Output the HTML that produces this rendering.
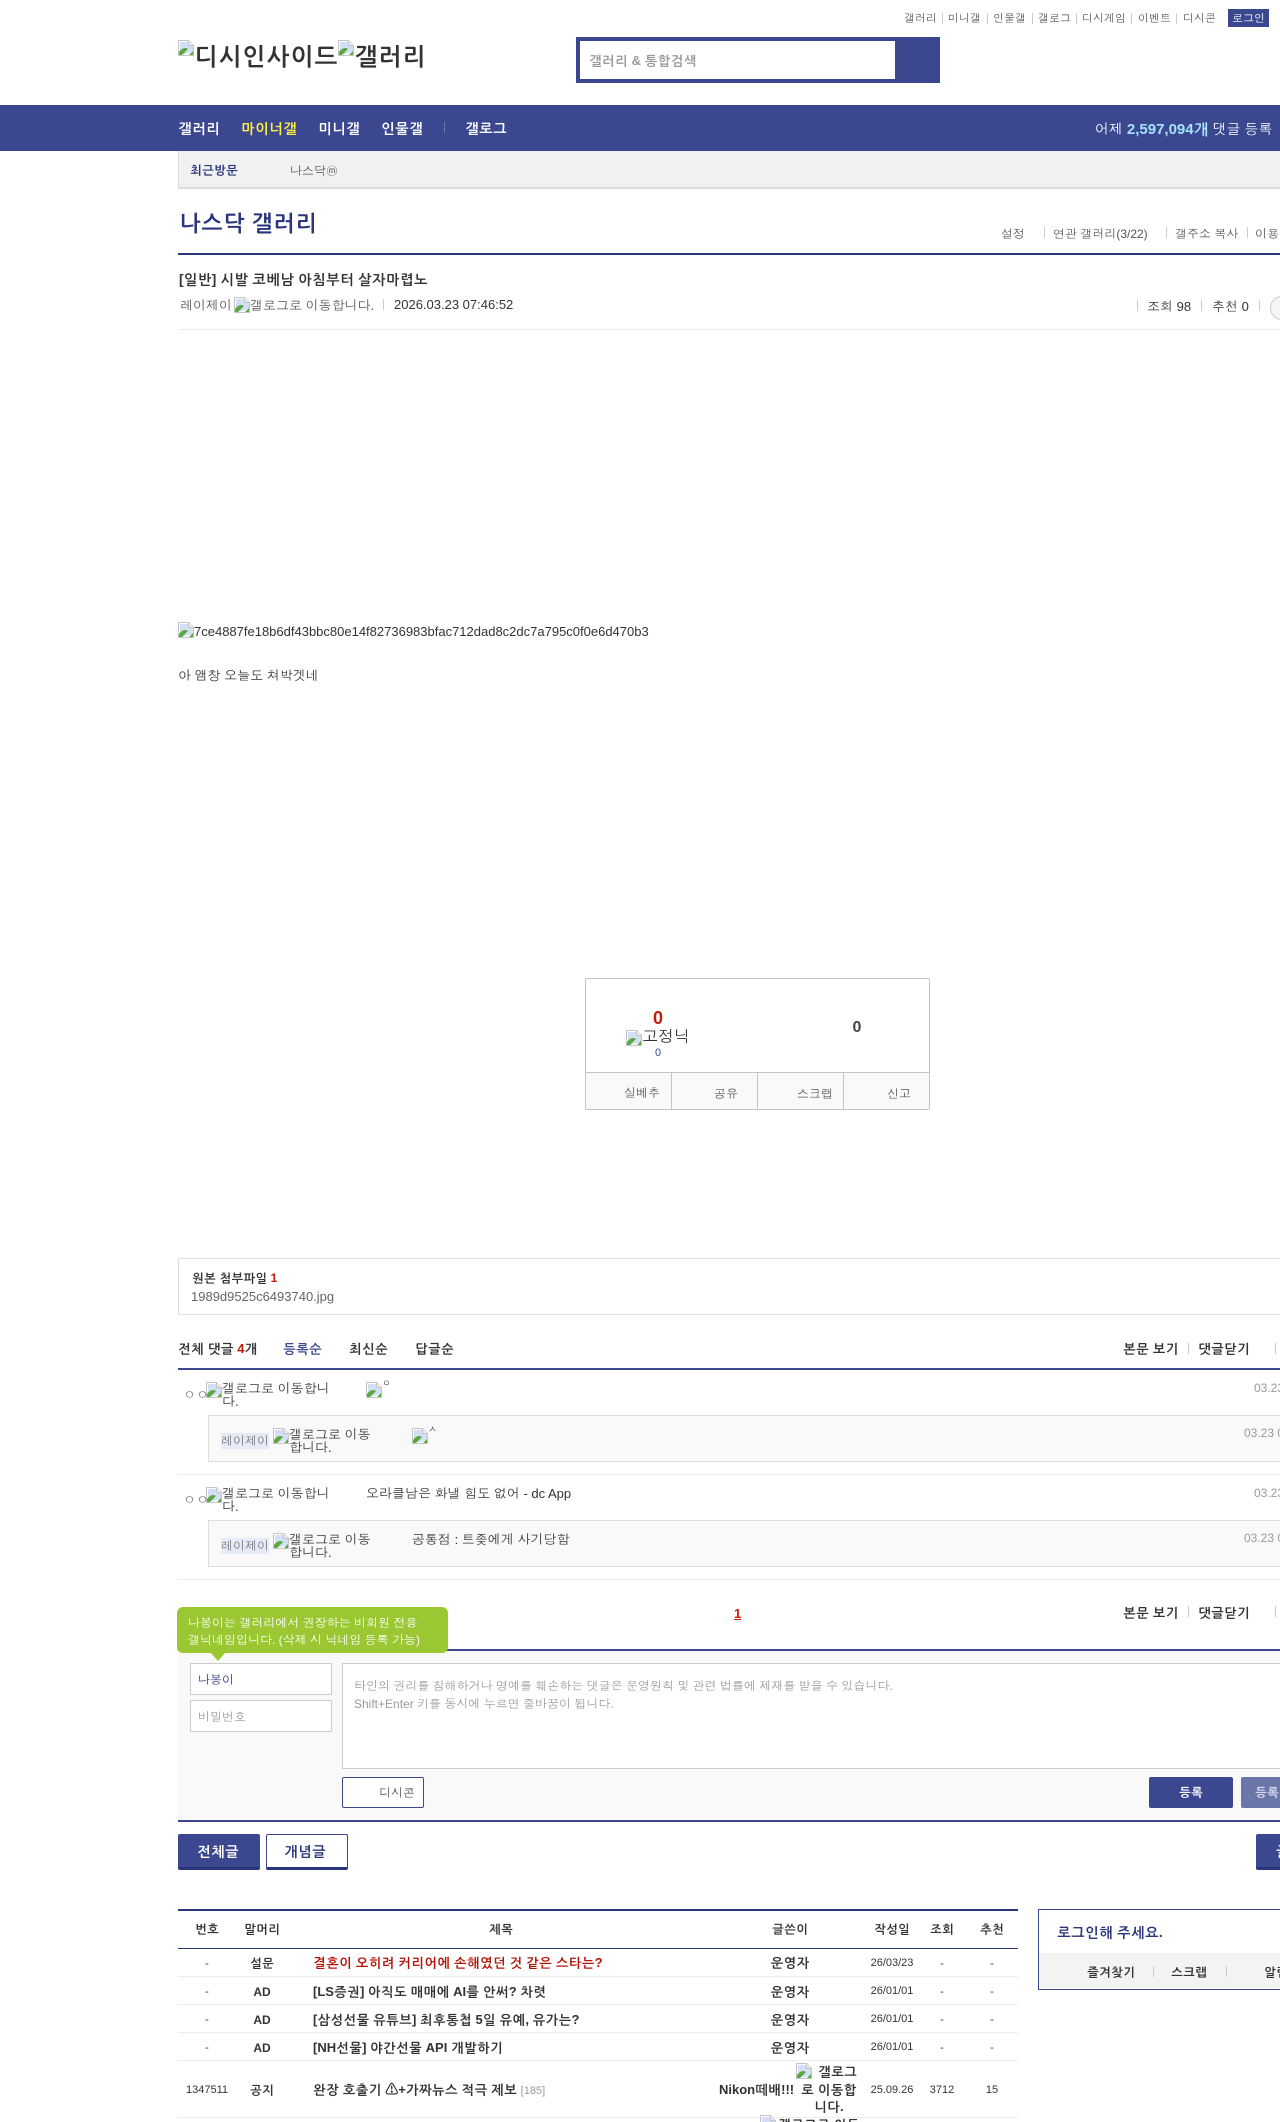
<!DOCTYPE html>
<html><head><meta charset="utf-8"><title>나스닥 갤러리</title>
<style>
html,body{margin:0;padding:0;width:1280px;height:2122px;overflow:hidden;background:#fff}
body{position:relative;font-family:"Liberation Sans",Dotum,Gulim,"Noto Sans CJK KR",sans-serif;font-size:12px;color:#333}
.t{position:absolute;white-space:nowrap;line-height:16px;margin-top:1px}
.b,b{font-weight:bold;font-family:"Liberation Sans",NanumGothicCoding,Gulim,"Noto Sans CJK KR",sans-serif}
.r{position:absolute}
.c{transform:translateX(-50%)}
.i{position:absolute;width:16px;height:16px}
.s{position:absolute;width:1px;height:11px;background:#ccc}
</style></head><body>
<svg width="0" height="0" style="position:absolute"><symbol id="bk" viewBox="0 0 16 16"><path d="M.5 15.500V.5h10l5 5v10z" fill="#fff" stroke="#c4c4c4"/><path d="M2 2h8v4h5v6L8 14H2z" fill="#d3dff6"/><path d="M1 15v-3c3-4 6-5 9-3L4 15zM11 15l4-4v4z" fill="#5aa83f"/><path d="M10.500.5v5h5" fill="#eee" stroke="#c4c4c4"/></symbol></svg>

<span class="t" style="left:904px;top:10px;font-size:11px;color:#555">갤러리</span><i class="s" style="left:942px;top:13px"></i>
<span class="t" style="left:948px;top:10px;font-size:11px;color:#555">미니갤</span><i class="s" style="left:987px;top:13px"></i>
<span class="t" style="left:993px;top:10px;font-size:11px;color:#555">인물갤</span><i class="s" style="left:1032px;top:13px"></i>
<span class="t" style="left:1038px;top:10px;font-size:11px;color:#555">갤로그</span><i class="s" style="left:1076px;top:13px"></i>
<span class="t" style="left:1082px;top:10px;font-size:11px;color:#555">디시게임</span><i class="s" style="left:1131px;top:13px"></i>
<span class="t" style="left:1138px;top:10px;font-size:11px;color:#555">이벤트</span><i class="s" style="left:1176px;top:13px"></i>
<span class="t" style="left:1183px;top:10px;font-size:11px;color:#555">디시콘</span>
<div class="r" style="left:1228px;top:9px;width:41px;height:18px;background:#3b4890"></div>
<span class="t" style="left:1232px;top:10px;font-size:11px;color:#fff">로그인</span>

<svg class="i" style="left:178px;top:40px"><use href="#bk"/></svg>
<span class="t b" style="left:194px;top:44px;font-size:24px;line-height:24px;color:#333">디시인사이드</span>
<svg class="i" style="left:338px;top:40px"><use href="#bk"/></svg>
<span class="t b" style="left:354px;top:44px;font-size:24px;line-height:24px;color:#333">갤러리</span>

<div class="r" style="left:576px;top:37px;width:364px;height:46px;background:#3b4890"></div>
<div class="r" style="left:580px;top:41px;width:315px;height:38px;background:#fff"></div>
<span class="t b" style="left:589px;top:52px;font-size:13px;color:#999">갤러리 &amp; 통합검색</span>

<div class="r" style="left:0;top:105px;width:1280px;height:46px;background:#3b4890"></div>
<span class="t b" style="left:178px;top:119px;font-size:14px;color:#fff">갤러리</span>
<span class="t b" style="left:241px;top:119px;font-size:14px;color:#ffed44">마이너갤</span>
<span class="t b" style="left:318px;top:119px;font-size:14px;color:#fff">미니갤</span>
<span class="t b" style="left:381px;top:119px;font-size:14px;color:#fff">인물갤</span>
<i class="s" style="left:444px;top:122px;background:#6a76b0"></i>
<span class="t b" style="left:465px;top:119px;font-size:14px;color:#fff">갤로그</span>
<span class="t" style="left:1095px;top:120px;font-size:14px;color:#fff">어제 <b style="color:#a3e3ff;font-size:15px">2,597,094개</b> 댓글 등록</span>

<div class="r" style="left:178px;top:151px;width:1102px;height:36px;background:#f1f1f1;border-left:1px solid #ddd;border-bottom:2px solid #ddd"></div>
<span class="t b" style="left:190px;top:161px;color:#29367c">최근방문</span>
<span class="t" style="left:290px;top:162px;color:#555">나스닥ⓜ</span>

<span class="t b" style="left:179px;top:210px;font-size:22px;line-height:24px;color:#29367c">나스닥 갤러리</span>
<span class="t" style="left:1001px;top:225px;color:#555">설정</span><i class="s" style="left:1044px;top:227px"></i>
<span class="t" style="left:1053px;top:225px;color:#555">연관 갤러리(3/22)</span><i class="s" style="left:1166px;top:227px"></i>
<span class="t" style="left:1175px;top:225px;color:#555">갤주소 복사</span><i class="s" style="left:1247px;top:227px"></i>
<span class="t" style="left:1255px;top:225px;color:#555">이용안내</span>
<div class="r" style="left:178px;top:253px;width:1102px;height:2px;background:#29367c"></div>

<span class="t b" style="left:179px;top:270px;font-size:14px;color:#333">[일반] 시발 코베남 아침부터 살자마렵노</span>
<span class="t" style="left:180px;top:297px;font-size:13px;color:#555">레이제이</span>
<svg class="i" style="left:234px;top:297px"><use href="#bk"/></svg>
<span class="t" style="left:250px;top:297px;font-size:13px;color:#555">갤로그로 이동합니다.</span>
<i class="s" style="left:383px;top:299px"></i>
<span class="t" style="left:394px;top:296px;font-size:13px;color:#333">2026.03.23 07:46:52</span>
<i class="s" style="left:1137px;top:300px"></i>
<span class="t" style="left:1147px;top:298px;font-size:13px;color:#333">조회 98</span>
<i class="s" style="left:1201px;top:300px"></i>
<span class="t" style="left:1212px;top:298px;font-size:13px;color:#333">추천 0</span>
<i class="s" style="left:1259px;top:300px"></i>
<div class="r" style="left:1270px;top:296px;width:30px;height:22px;border:1px solid #ccc;border-radius:12px;background:#f5f5f5"></div>
<div class="r" style="left:178px;top:329px;width:1102px;height:1px;background:#eee"></div>

<svg class="i" style="left:178px;top:622px"><use href="#bk"/></svg>
<span class="t" style="left:194px;top:623px;font-size:13px;color:#333">7ce4887fe18b6df43bbc80e14f82736983bfac712dad8c2dc7a795c0f0e6d470b3</span>
<span class="t" style="left:178px;top:667px;font-size:13px;color:#333">아 앰창 오늘도 쳐박겟네</span>

<div class="r" style="left:585px;top:978px;width:343px;height:130px;border:1px solid #c4c4c4;border-radius:2px;background:#fff"></div>
<div class="r" style="left:586px;top:1072px;width:343px;height:36px;background:#f9f9f9;border-top:1px solid #c4c4c4"></div>
<i class="r" style="left:671px;top:1072px;width:1px;height:37px;background:#c4c4c4"></i>
<i class="r" style="left:757px;top:1072px;width:1px;height:37px;background:#c4c4c4"></i>
<i class="r" style="left:843px;top:1072px;width:1px;height:37px;background:#c4c4c4"></i>
<span class="t b c" style="left:658px;top:1009px;font-size:18px;color:#c21b0c">0</span>
<svg class="i" style="left:626px;top:1030px"><use href="#bk"/></svg>
<span class="t" style="left:642px;top:1029px;font-size:16px;color:#333">고정닉</span>
<span class="t c" style="left:658px;top:1044px;font-size:11px;color:#3b4890">0</span>
<span class="t b c" style="left:857px;top:1019px;font-size:16px;color:#444">0</span>
<span class="t" style="left:624px;top:1084px;color:#555">실베추</span>
<span class="t" style="left:714px;top:1085px;color:#555">공유</span>
<span class="t" style="left:797px;top:1085px;color:#555">스크랩</span>
<span class="t" style="left:887px;top:1085px;color:#555">신고</span>

<div class="r" style="left:178px;top:1258px;width:1102px;height:55px;border:1px solid #ddd;border-right:0"></div>
<span class="t b" style="left:192px;top:1269px;color:#333">원본 첨부파일 <span style="color:#c21b0c">1</span></span>
<span class="t" style="left:191px;top:1288px;font-size:13px;color:#666">1989d9525c6493740.jpg</span>

<span class="t b" style="left:178px;top:1340px;font-size:13px;color:#333">전체 댓글 <span style="color:#c21b0c">4</span>개</span>
<span class="t b" style="left:283px;top:1340px;font-size:13px;color:#3b4890">등록순</span>
<span class="t b" style="left:349px;top:1340px;font-size:13px;color:#333">최신순</span>
<span class="t b" style="left:415px;top:1340px;font-size:13px;color:#333">답글순</span>
<span class="t b" style="left:1123px;top:1340px;font-size:13px;color:#333">본문 보기</span><i class="s" style="left:1188px;top:1343px"></i>
<span class="t b" style="left:1198px;top:1340px;font-size:13px;color:#333">댓글닫기</span><i class="s" style="left:1275px;top:1343px"></i>
<div class="r" style="left:178px;top:1368px;width:1102px;height:2px;background:#3b4890"></div>

<span class="t" style="left:183px;top:1386px;font-size:13px;color:#777">ㅇㅇ</span>
<svg class="i" style="left:206px;top:1382px"><use href="#bk"/></svg>
<span class="t" style="left:222px;top:1381px;font-size:13px;line-height:13px;color:#333;white-space:normal;width:112px">갤로그로 이동합니다.</span>
<svg class="i" style="left:366px;top:1382px"><use href="#bk"/></svg>
<span class="t" style="left:382px;top:1376px;font-size:9px;line-height:12px;color:#333">ㅇ</span>
<span class="t" style="left:1254px;top:1379px;color:#999">03.23 07:51:13</span>
<div class="r" style="left:208px;top:1415px;width:1072px;height:45px;background:#f9f9f9;border:1px solid #ddd;border-right:0"></div>
<span class="t" style="left:221px;top:1432px;color:#777;background:#e6eaf9">레이제이</span>
<svg class="i" style="left:273px;top:1428px"><use href="#bk"/></svg>
<span class="t" style="left:289px;top:1427px;font-size:13px;line-height:13px;color:#333;white-space:normal;width:86px">갤로그로 이동합니다.</span>
<svg class="i" style="left:412px;top:1428px"><use href="#bk"/></svg>
<span class="t" style="left:428px;top:1422px;font-size:9px;line-height:12px;color:#333">ㅅ</span>
<span class="t" style="left:1244px;top:1424px;color:#999">03.23 08:10:02</span>
<div class="r" style="left:178px;top:1474px;width:1102px;height:1px;background:#eee"></div>

<span class="t" style="left:183px;top:1491px;font-size:13px;color:#777">ㅇㅇ</span>
<svg class="i" style="left:206px;top:1487px"><use href="#bk"/></svg>
<span class="t" style="left:222px;top:1486px;font-size:13px;line-height:13px;color:#333;white-space:normal;width:112px">갤로그로 이동합니다.</span>
<span class="t" style="left:366px;top:1485px;font-size:13px;color:#333">오라클남은 화낼 힘도 없어 - dc App</span>
<span class="t" style="left:1254px;top:1484px;color:#999">03.23 08:12:40</span>
<div class="r" style="left:208px;top:1520px;width:1072px;height:45px;background:#f9f9f9;border:1px solid #ddd;border-right:0"></div>
<span class="t" style="left:221px;top:1537px;color:#777;background:#e6eaf9">레이제이</span>
<svg class="i" style="left:273px;top:1533px"><use href="#bk"/></svg>
<span class="t" style="left:289px;top:1532px;font-size:13px;line-height:13px;color:#333;white-space:normal;width:86px">갤로그로 이동합니다.</span>
<span class="t" style="left:412px;top:1531px;font-size:13px;color:#333">공통점 : 트좆에게 사기당함</span>
<span class="t" style="left:1244px;top:1529px;color:#999">03.23 08:20:11</span>
<div class="r" style="left:178px;top:1579px;width:1102px;height:1px;background:#eee"></div>

<span class="t b" style="left:734px;top:1605px;font-size:13px;color:#c21b0c;text-decoration:underline">1</span>
<span class="t b" style="left:1123px;top:1604px;font-size:13px;color:#333">본문 보기</span><i class="s" style="left:1188px;top:1606px"></i>
<span class="t b" style="left:1198px;top:1604px;font-size:13px;color:#333">댓글닫기</span><i class="s" style="left:1275px;top:1606px"></i>

<div class="r" style="left:178px;top:1651px;width:1102px;height:169px;background:#f9f9f9"></div>
<div class="r" style="left:178px;top:1649px;width:1102px;height:2px;background:#3b4890"></div>
<div class="r" style="left:178px;top:1820px;width:1102px;height:2px;background:#3b4890"></div>
<div class="r" style="left:177px;top:1607px;width:271px;height:46px;background:#9bc832;border-radius:6px"></div>
<div class="r" style="left:211px;top:1653px;width:0;height:0;border-left:7px solid transparent;border-right:7px solid transparent;border-top:8px solid #9bc832"></div>
<span class="t" style="left:188px;top:1614px;color:#fff">나봉이는 갤러리에서 권장하는 비회원 전용</span>
<span class="t" style="left:188px;top:1631px;color:#fff">갤닉네임입니다. (삭제 시 닉네임 등록 가능)</span>

<div class="r" style="left:190px;top:1663px;width:140px;height:30px;background:#fff;border:1px solid #ccc"></div>
<span class="t" style="left:198px;top:1671px;color:#29367c">나봉이</span>
<div class="r" style="left:190px;top:1700px;width:140px;height:30px;background:#fff;border:1px solid #ccc"></div>
<span class="t" style="left:198px;top:1708px;color:#999">비밀번호</span>
<div class="r" style="left:342px;top:1663px;width:938px;height:104px;background:#fff;border:1px solid #ccc;border-right:0"></div>
<span class="t" style="left:354px;top:1677px;color:#999">타인의 권리를 침해하거나 명예를 훼손하는 댓글은 운영원칙 및 관련 법률에 제재를 받을 수 있습니다.</span>
<span class="t" style="left:354px;top:1695px;color:#999">Shift+Enter 키를 동시에 누르면 줄바꿈이 됩니다.</span>
<div class="r" style="left:342px;top:1777px;width:80px;height:29px;background:#fff;border:1px solid #3b4890;border-radius:2px"></div>
<span class="t" style="left:379px;top:1784px;color:#555">디시콘</span>
<div class="r" style="left:1149px;top:1777px;width:84px;height:31px;background:#3b4890;border-radius:2px"></div>
<span class="t b" style="left:1179px;top:1783px;color:#fff">등록</span>
<div class="r" style="left:1241px;top:1777px;width:39px;height:31px;background:#6a76a8;border-radius:2px 0 0 2px"></div>
<span class="t b" style="left:1255px;top:1783px;color:#dde">등록</span>

<div class="r" style="left:178px;top:1834px;width:82px;height:33px;background:#3b4890;border-bottom:3px solid #29367c;border-radius:2px"></div>
<span class="t b" style="left:197px;top:1842px;font-size:14px;color:#fff">전체글</span>
<div class="r" style="left:266px;top:1834px;width:80px;height:32px;background:#fff;border:1px solid #3b4890;border-bottom:3px solid #29367c;border-radius:2px"></div>
<span class="t b" style="left:284px;top:1842px;font-size:14px;color:#29367c">개념글</span>
<div class="r" style="left:1256px;top:1834px;width:24px;height:33px;background:#3b4890;border-bottom:3px solid #29367c;border-radius:2px 0 0 2px"></div>
<span class="t b" style="left:1276px;top:1842px;font-size:14px;color:#fff">글</span>

<div class="r" style="left:178px;top:1909px;width:840px;height:2px;background:#29367c"></div>
<span class="t b c" style="left:207px;top:1920px;color:#333">번호</span>
<span class="t b c" style="left:262px;top:1920px;color:#333">말머리</span>
<span class="t b c" style="left:501px;top:1920px;color:#333">제목</span>
<span class="t b c" style="left:790px;top:1920px;color:#333">글쓴이</span>
<span class="t b c" style="left:892px;top:1920px;color:#333">작성일</span>
<span class="t b c" style="left:942px;top:1920px;color:#333">조회</span>
<span class="t b c" style="left:992px;top:1920px;color:#333">추천</span>
<div class="r" style="left:178px;top:1948px;width:840px;height:1px;background:#29367c"></div>

<span class="t c" style="left:207px;top:1955px;font-size:11px">-</span>
<span class="t b c" style="left:262px;top:1954px">설문</span>
<span class="t b" style="left:313px;top:1954px;font-size:13px;color:#b3140a">결혼이 오히려 커리어에 손해였던 것 같은 스타는?</span>
<span class="t b c" style="left:790px;top:1954px;font-size:13px">운영자</span>
<span class="t c" style="left:892px;top:1954px;font-size:11px">26/03/23</span>
<span class="t c" style="left:942px;top:1955px;font-size:11px">-</span>
<span class="t c" style="left:992px;top:1955px;font-size:11px">-</span>
<div class="r" style="left:178px;top:1976px;width:840px;height:1px;background:#eee"></div>

<span class="t c" style="left:207px;top:1983px;font-size:11px">-</span>
<span class="t b c" style="left:262px;top:1983px">AD</span>
<span class="t b" style="left:313px;top:1983px;font-size:13px">[LS증권] 아직도 매매에 AI를 안써? 차렷</span>
<span class="t b c" style="left:790px;top:1983px;font-size:13px">운영자</span>
<span class="t c" style="left:892px;top:1982px;font-size:11px">26/01/01</span>
<span class="t c" style="left:942px;top:1983px;font-size:11px">-</span>
<span class="t c" style="left:992px;top:1983px;font-size:11px">-</span>
<div class="r" style="left:178px;top:2004px;width:840px;height:1px;background:#eee"></div>

<span class="t c" style="left:207px;top:2011px;font-size:11px">-</span>
<span class="t b c" style="left:262px;top:2011px">AD</span>
<span class="t b" style="left:313px;top:2011px;font-size:13px">[삼성선물 유튜브] 최후통첩 5일 유예, 유가는?</span>
<span class="t b c" style="left:790px;top:2011px;font-size:13px">운영자</span>
<span class="t c" style="left:892px;top:2010px;font-size:11px">26/01/01</span>
<span class="t c" style="left:942px;top:2011px;font-size:11px">-</span>
<span class="t c" style="left:992px;top:2011px;font-size:11px">-</span>
<div class="r" style="left:178px;top:2032px;width:840px;height:1px;background:#eee"></div>

<span class="t c" style="left:207px;top:2039px;font-size:11px">-</span>
<span class="t b c" style="left:262px;top:2039px">AD</span>
<span class="t b" style="left:313px;top:2039px;font-size:13px">[NH선물] 야간선물 API 개발하기</span>
<span class="t b c" style="left:790px;top:2039px;font-size:13px">운영자</span>
<span class="t c" style="left:892px;top:2038px;font-size:11px">26/01/01</span>
<span class="t c" style="left:942px;top:2039px;font-size:11px">-</span>
<span class="t c" style="left:992px;top:2039px;font-size:11px">-</span>
<div class="r" style="left:178px;top:2060px;width:840px;height:1px;background:#eee"></div>

<span class="t c" style="left:207px;top:2081px;font-size:11px">1347511</span>
<span class="t b c" style="left:262px;top:2081px">공지</span>
<span class="t b" style="left:313px;top:2081px;font-size:13px">완장 호출기 ⚠+가짜뉴스 적극 제보 <span style="font-weight:normal;font-size:11px;color:#999">[185]</span></span>
<span class="t b" style="left:719px;top:2081px;font-size:13px">Nikon떼배!!!</span>
<svg class="i" style="left:796px;top:2063px"><use href="#bk"/></svg>
<span class="t b" style="left:818px;top:2063px;font-size:13px">갤로그</span>
<span class="t b" style="left:801px;top:2081px;font-size:13px">로 이동합</span>
<span class="t b" style="left:814px;top:2098px;font-size:13px">니다.</span>
<span class="t c" style="left:892px;top:2081px;font-size:11px">25.09.26</span>
<span class="t c" style="left:942px;top:2081px;font-size:11px">3712</span>
<span class="t c" style="left:992px;top:2081px;font-size:11px">15</span>
<div class="r" style="left:178px;top:2117px;width:840px;height:1px;background:#eee"></div>
<svg class="i" style="left:760px;top:2115px"><use href="#bk"/></svg>
<span class="t b" style="left:778px;top:2116px;font-size:13px">갤로그로 이동</span>

<div class="r" style="left:1038px;top:1909px;width:242px;height:79px;border:1px solid #3b4890;border-right:0;background:#fff"></div>
<div class="r" style="left:1039px;top:1953px;width:241px;height:35px;background:#f3f3f3"></div>
<span class="t b" style="left:1057px;top:1923px;font-size:14px;color:#29367c">로그인해 주세요.</span>
<span class="t b" style="left:1087px;top:1963px;color:#333">즐겨찾기</span><i class="s" style="left:1153px;top:1966px"></i>
<span class="t b" style="left:1171px;top:1963px;color:#333">스크랩</span><i class="s" style="left:1226px;top:1966px"></i>
<span class="t b" style="left:1264px;top:1963px;color:#333">알림</span>
</body></html>
